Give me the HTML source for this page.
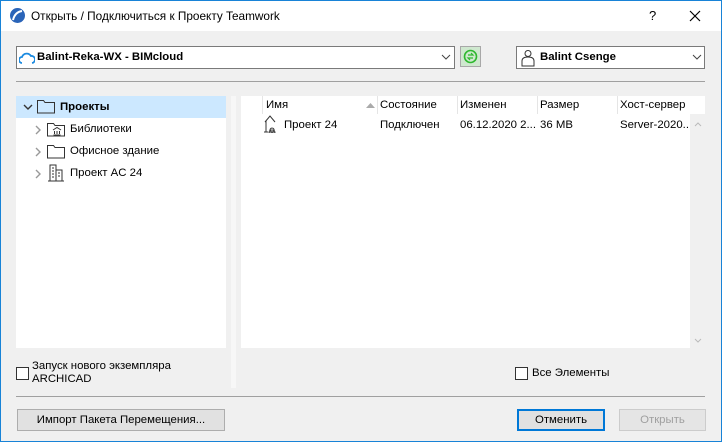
<!DOCTYPE html><html><head><style>
*{margin:0;padding:0;box-sizing:border-box}
body{width:722px;height:442px;background:#f0f0f0;font-family:"Liberation Sans",sans-serif;font-size:11.4px;color:#000;position:relative;overflow:hidden}
.a{position:absolute;white-space:nowrap}
.win{left:0;top:0;width:722px;height:442px;border:1px solid #1883d7}
</style></head><body>
<div class="a" style="left:0;top:0;width:722px;height:31px;background:#fff"></div>
<svg class="a" style="left:9px;top:7px" width="17" height="17"><circle cx="8.5" cy="8.5" r="7.5" fill="#2a64b8"/><path d="M4 13 Q6 5 13 4" stroke="#fff" stroke-width="2" fill="none"/></svg>
<div class="a" style="left:31px;top:9px;font-size:11.8px">Открыть / Подключиться к Проекту Teamwork</div>
<div class="a" style="left:649px;top:8px;font-size:13px">?</div>
<svg class="a" style="left:689px;top:10px" width="12" height="12"><path d="M1 1L11 11M11 1L1 11" stroke="#000" stroke-width="1.2"/></svg>

<div class="a" style="left:16px;top:46px;width:439px;height:23px;background:#fff;border:1px solid #7a7a7a"></div>
<svg class="a" style="left:19px;top:52px" width="16" height="12"><path d="M3 11 A3 3 0 0 1 3 5 A5 5 0 0 1 12 4 A3.5 3.5 0 0 1 13 11" stroke="#1b8ae0" stroke-width="1.8" fill="none"/></svg>
<div class="a" style="left:37px;top:51px;font-weight:bold">Balint-Reka-WX - BIMcloud</div>
<svg class="a" style="left:441px;top:54px" width="10" height="6"><path d="M1 1L5 5L9 1" stroke="#444" fill="none"/></svg>
<div class="a" style="left:460px;top:46px;width:21px;height:21px;background:#cfe8cf;border:1px solid #a8a8a8"></div>
<svg class="a" style="left:462px;top:48px" width="17" height="17"><circle cx="8.5" cy="8.5" r="6" stroke="#2db82d" stroke-width="1.6" fill="none"/><path d="M6 7h5l-2-2M11 10H6l2 2" stroke="#2db82d" stroke-width="1.2" fill="none"/></svg>
<div class="a" style="left:516px;top:46px;width:189px;height:23px;background:#fff;border:1px solid #7a7a7a"></div>
<svg class="a" style="left:521px;top:49px" width="14" height="18"><circle cx="7" cy="4.5" r="3" stroke="#333" fill="none"/><path d="M1 17V12Q1 8 7 8Q13 8 13 12V17Z" stroke="#333" fill="none"/></svg>
<div class="a" style="left:540px;top:51px;font-weight:bold">Balint Csenge</div>
<svg class="a" style="left:692px;top:54px" width="10" height="6"><path d="M1 1L5 5L9 1" stroke="#444" fill="none"/></svg>
<div class="a" style="left:16px;top:81px;width:689px;height:1px;background:#a0a0a0"></div>

<div class="a" style="left:16px;top:96px;width:210px;height:252px;background:#fff"></div>
<div class="a" style="left:16px;top:96px;width:210px;height:22px;background:#cce8ff"></div>
<svg class="a" style="left:23px;top:103px" width="10" height="8"><path d="M1 2L5 6L9 2" stroke="#333" stroke-width="1.4" fill="none"/></svg>
<svg class="a" style="left:37px;top:98px" width="18" height="16"><path d="M0.5 2.5h6l1.5 2h9.5v10.5H0.5Z" stroke="#333" fill="none"/></svg>
<div class="a" style="left:60px;top:101px;font-weight:bold">Проекты</div>
<svg class="a" style="left:35px;top:125px" width="6" height="10"><path d="M1 1L5 5L1 9" stroke="#999" stroke-width="1.4" fill="none"/></svg>
<svg class="a" style="left:47px;top:121px" width="18" height="16"><path d="M0.5 2.5h6l1.5 2h9.5v10.5H0.5Z" stroke="#333" fill="none"/><path d="M6 9l4-2.5 4 2.5M6.5 14h7M7.5 10v3M10 10v3M12.5 10v3" stroke="#333" fill="none"/></svg>
<div class="a" style="left:70px;top:123px">Библиотеки</div>
<svg class="a" style="left:35px;top:147px" width="6" height="10"><path d="M1 1L5 5L1 9" stroke="#999" stroke-width="1.4" fill="none"/></svg>
<svg class="a" style="left:47px;top:143px" width="18" height="16"><path d="M0.5 2.5h6l1.5 2h9.5v10.5H0.5Z" stroke="#333" fill="none"/></svg>
<div class="a" style="left:70px;top:145px">Офисное здание</div>
<svg class="a" style="left:35px;top:169px" width="6" height="10"><path d="M1 1L5 5L1 9" stroke="#999" stroke-width="1.4" fill="none"/></svg>
<svg class="a" style="left:48px;top:164px" width="16" height="18"><path d="M0 17h16M2 17V1h6v16M8 6h6v11M4 4h2M4 7h2M4 10h2M4 13h2M10 9h2M10 12h2" stroke="#333" fill="none"/></svg>
<div class="a" style="left:70px;top:167px">Проект AC 24</div>

<div class="a" style="left:231px;top:96px;width:5px;height:292px;background:#f7f7f7"></div>

<div class="a" style="left:241px;top:96px;width:464px;height:252px;background:#fff"></div>
<div class="a" style="left:262px;top:96px;width:1px;height:18px;background:#e5e5e5"></div>
<div class="a" style="left:377px;top:96px;width:1px;height:18px;background:#e5e5e5"></div>
<div class="a" style="left:457px;top:96px;width:1px;height:18px;background:#e5e5e5"></div>
<div class="a" style="left:537px;top:96px;width:1px;height:18px;background:#e5e5e5"></div>
<div class="a" style="left:617px;top:96px;width:1px;height:18px;background:#e5e5e5"></div>
<div class="a" style="left:266px;top:99px">Имя</div>
<svg class="a" style="left:366px;top:103px" width="9" height="6"><path d="M0 5L4.5 0L9 5Z" fill="#aaa"/></svg>
<div class="a" style="left:380px;top:99px">Состояние</div>
<div class="a" style="left:460px;top:99px">Изменен</div>
<div class="a" style="left:540px;top:99px">Размер</div>
<div class="a" style="left:620px;top:99px">Хост-сервер</div>
<div class="a" style="left:690px;top:114px;width:15px;height:234px;background:#f0f0f0"></div>
<svg class="a" style="left:694px;top:122px" width="8" height="5"><path d="M1 4L4 1L7 4" stroke="#bbb" fill="none"/></svg>
<svg class="a" style="left:694px;top:338px" width="8" height="5"><path d="M1 1L4 4L7 1" stroke="#bbb" fill="none"/></svg>
<svg class="a" style="left:264px;top:115px" width="19" height="18"><path d="M1 7L6 1L11 7M2 6v11M0 17h4M8 13a2 2 0 1 0 .1 0M5 18q0-3 3-3q3 0 3 3Z" stroke="#333" fill="none"/></svg>
<div class="a" style="left:284px;top:119px">Проект 24</div>
<div class="a" style="left:380px;top:119px">Подключен</div>
<div class="a" style="left:460px;top:119px;width:76px;overflow:hidden">06.12.2020 2...</div>
<div class="a" style="left:540px;top:119px">36 MB</div>
<div class="a" style="left:620px;top:119px;width:70px;overflow:hidden">Server-2020...</div>

<div class="a" style="left:16px;top:367px;width:13px;height:13px;background:#fff;border:1px solid #333"></div>
<div class="a" style="left:32px;top:360px;line-height:13px">Запуск нового экземпляра<br>ARCHICAD</div>
<div class="a" style="left:515px;top:367px;width:13px;height:13px;background:#fff;border:1px solid #333"></div>
<div class="a" style="left:532px;top:367px">Все Элементы</div>
<div class="a" style="left:16px;top:396px;width:689px;height:1px;background:#a0a0a0"></div>

<div class="a" style="left:17px;top:409px;width:208px;height:22px;background:#e1e1e1;border:1px solid #adadad;text-align:center;line-height:20px">Импорт Пакета Перемещения...</div>
<div class="a" style="left:517px;top:409px;width:88px;height:22px;background:#e1e1e1;border:2px solid #0078d7;text-align:center;line-height:18px">Отменить</div>
<div class="a" style="left:619px;top:409px;width:87px;height:22px;background:#e5e5e5;border:1px solid #cccccc;text-align:center;line-height:20px;color:#a0a0a0">Открыть</div>
<div class="a win"></div>
</body></html>
